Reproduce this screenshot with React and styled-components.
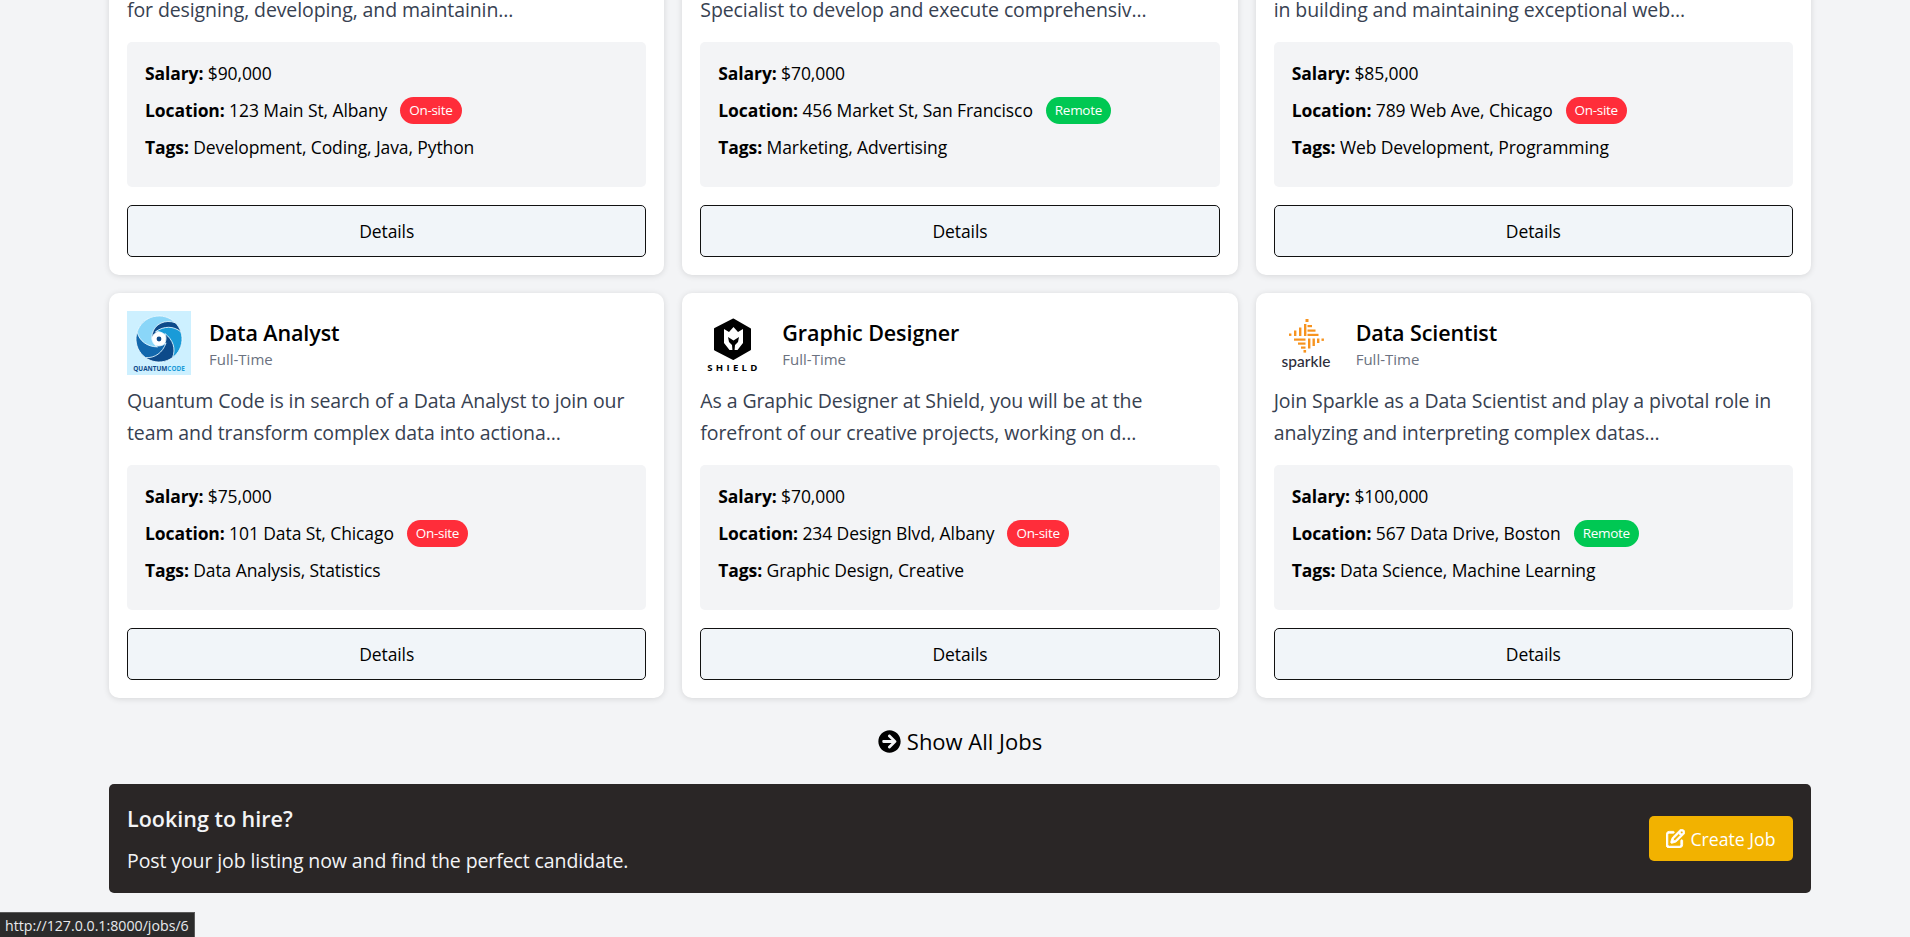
import React from "react"
import styled, { createGlobalStyle } from "styled-components"
import { FaArrowCircleRight } from "react-icons/fa"
import { FaRegPenToSquare } from "react-icons/fa6"

const GlobalStyle = createGlobalStyle`
  html, body {
    margin: 0;
    height: 100%;
    overflow: hidden;
    background: #f3f4f6;
  }
  * { box-sizing: border-box; }
  body {
    font-family: "Open Sans", "Noto Sans", "Liberation Sans", sans-serif;
    color: #000;
  }
`

const Page = styled.div`
  height: 937px;
  overflow: hidden;
  padding: 0 99px 0 109px;
`

const JobGrid = styled.section`
  display: grid;
  grid-template-columns: repeat(3, 1fr);
  gap: 18px;
  margin-top: -34px;
`

const Card = styled.article`
  background: #fff;
  border-radius: 10px;
  box-shadow: 0 1px 6px rgba(0, 0, 0, 0.12);
  padding: 18px;
  display: flex;
  flex-direction: column;
`

const CardHead = styled.header`
  display: flex;
  align-items: center;
  gap: 18px;
  height: 64px;
`

const HeadText = styled.div`
  padding-top: 2px;
`

const JobTitle = styled.h3`
  margin: 0;
  font-size: 21.5px;
  line-height: 28px;
  font-weight: 600;
  letter-spacing: -0.1px;
`

const JobType = styled.div`
  margin-top: 2px;
  font-size: 15px;
  line-height: 20px;
  color: #6b7280;
`

const Description = styled.p`
  margin: 10px 0 0;
  font-size: 19.5px;
  line-height: 32px;
  color: #374151;
  letter-spacing: -0.1px;
  white-space: nowrap;
`

const Info = styled.div`
  margin-top: 16px;
  background: #f3f4f6;
  border-radius: 5px;
  padding: 17px 18px 24px;
  height: 145px;
  font-size: 17.5px;
  letter-spacing: -0.1px;
`

const InfoRow = styled.div`
  display: flex;
  align-items: center;
  height: 28px;
  margin-bottom: 9px;

  b { font-weight: 700; }
`

const Badge = styled.span`
  margin-left: 13px;
  height: 27px;
  padding: 0 9px;
  border-radius: 14px;
  display: inline-flex;
  align-items: center;
  font-size: 13.5px;
  letter-spacing: -0.3px;
  color: #fff;
  background: ${p => (p.$remote ? "#00c853" : "#ff2d3a")};
`

const DetailsButton = styled.button`
  margin-top: 18px;
  height: 52px;
  width: 100%;
  background: #f1f5f9;
  border: 1px solid #111;
  border-radius: 5px;
  font: inherit;
  font-size: 17.5px;
  letter-spacing: -0.1px;
  color: #000;
`

const ShowAll = styled.a`
  display: flex;
  justify-content: center;
  align-items: center;
  gap: 6px;
  height: 86px;
  font-size: 22px;
  color: #000;
`

const Banner = styled.section`
  background: #2a2626;
  border-radius: 5px;
  height: 109px;
  padding: 0 18px;
  display: flex;
  align-items: center;
  justify-content: space-between;
  color: #f3f4f6;
`

const BannerCopy = styled.div`
  padding-top: 2px;
`

const BannerTitle = styled.h2`
  margin: 0 0 14px;
  font-size: 21.5px;
  line-height: 28px;
  font-weight: 600;
`

const BannerText = styled.p`
  margin: 0;
  font-size: 19.5px;
  line-height: 28px;
  letter-spacing: -0.1px;
`

const CreateButton = styled.button`
  width: 144px;
  height: 45px;
  border: 0;
  border-radius: 5px;
  background: #f2b200;
  color: #fff;
  font: inherit;
  font-size: 17.7px;
  display: flex;
  align-items: center;
  justify-content: center;
  gap: 5px;

  svg {
    stroke: currentColor;
    stroke-width: 24px;
  }
`

const StatusBubble = styled.div`
  position: fixed;
  left: 0;
  bottom: 0;
  width: 195px;
  height: 25px;
  padding-left: 5px;
  display: flex;
  align-items: center;
  background: #2b2b2b;
  border-top: 1px solid #5a5a5a;
  border-right: 1px solid #5a5a5a;
  color: #e8eaed;
  font-size: 14.2px;
`

const LogoBox = styled.div`
  width: 64px;
  height: 64px;
  flex: none;
  svg { display: block; }
`

const blade = "M0 -23 A23 23 0 0 1 20.5 10.5 C21 0 13 -9 3 -8 C-3 -8 -7 -4 -8 1 C-11 -9 -8 -18 0 -23 Z"
const blades = [
  { rotate: 0, fill: "#0d4a8a" },
  { rotate: 72, fill: "#1a9bd8" },
  { rotate: 144, fill: "#0d4a8a" },
  { rotate: 216, fill: "#1268ad" },
  { rotate: 288, fill: "#8ad6f8" },
]

const QuantumLogo = () => (
  <svg width="64" height="64" viewBox="0 0 64 64">
    <rect width="64" height="64" fill="#cdf0ff" />
    <g transform="translate(32 28)">
      <circle r="11" fill="#fff" />
      {blades.map(b => (
        <path key={b.rotate} d={blade} fill={b.fill} stroke="#e4f7ff" strokeWidth="0.8" transform={`rotate(${b.rotate})`} />
      ))}
      <circle r="6" fill="#fff" />
      <circle r="2.4" fill="#0d4a8a" />
    </g>
    <text x="32" y="60" textAnchor="middle" fontSize="6.4" fontWeight="700" fontFamily="Open Sans, sans-serif" fill="#0d4a8a">
      QUANTUM<tspan fill="#1a9bd8">CODE</tspan>
    </text>
  </svg>
)

const ShieldLogo = () => (
  <svg width="64" height="64" viewBox="0 0 64 64">
    <path d="M33.5 8.5 L50 18 V38.5 L33.5 48 L15 38.5 V18 Z" fill="#000" stroke="#000" strokeWidth="2" strokeLinejoin="round" />
    <path d="M24 18 L29 21 L33.5 16 L38 21 L43 18 V32 L37.5 39 H29.5 L24 32 Z" fill="#fff" />
    <path d="M28 26 L33.5 29.5 L39 26 L38 31 L35 34 L34.5 40 H32.5 L32 34 L29 31 Z" fill="#000" />
    <text x="34" y="60" textAnchor="middle" fontSize="9.6" fontWeight="700" fontFamily="Open Sans, sans-serif" letterSpacing="3.3" fill="#000">SHIELD</text>
  </svg>
)

const sparkBars = [
  [31.5, 8, 3, 3], [15, 22.5, 2.4, 2.4], [20, 19.5, 2.4, 5.5], [25, 16.5, 2.4, 8.5], [30, 13, 2.4, 12],
  [33.5, 14, 4.5, 2.2], [33.5, 18.5, 8, 2.2], [33.5, 22.8, 11, 2.2],
  [20, 27.5, 11.5, 2.2], [24, 31.5, 7.5, 2.2], [27, 35.5, 4.5, 2.2], [29.5, 39, 2.6, 2.6],
  [34, 27.5, 2.4, 10], [38.5, 27.5, 2.4, 7.5], [43, 27.5, 2.4, 4.5], [47.5, 27.5, 2.4, 2.4],
]

const SparkleLogo = () => (
  <svg width="64" height="64" viewBox="0 0 64 64">
    {sparkBars.map(([x, y, w, h], i) => <rect key={i} x={x} y={y} width={w} height={h} fill="#f7931e" />)}
    <text x="32" y="56" textAnchor="middle" fontSize="15.5" fontWeight="500" fontFamily="Lato, sans-serif" fill="#2e2e3a">sparkle</text>
  </svg>
)

const topJobs = [
  { id: 1, desc: "for designing, developing, and maintainin...", salary: "$90,000", location: "123 Main St, Albany", remote: false, tags: "Development, Coding, Java, Python" },
  { id: 2, desc: "Specialist to develop and execute comprehensiv...", salary: "$70,000", location: "456 Market St, San Francisco", remote: true, tags: "Marketing, Advertising" },
  { id: 3, desc: "in building and maintaining exceptional web...", salary: "$85,000", location: "789 Web Ave, Chicago", remote: false, tags: "Web Development, Programming" },
]

const bottomJobs = [
  { id: 4, logo: <QuantumLogo />, title: "Data Analyst", desc: ["Quantum Code is in search of a Data Analyst to join our", "team and transform complex data into actiona..."], salary: "$75,000", location: "101 Data St, Chicago", remote: false, tags: "Data Analysis, Statistics" },
  { id: 5, logo: <ShieldLogo />, title: "Graphic Designer", desc: ["As a Graphic Designer at Shield, you will be at the", "forefront of our creative projects, working on d..."], salary: "$70,000", location: "234 Design Blvd, Albany", remote: false, tags: "Graphic Design, Creative" },
  { id: 6, logo: <SparkleLogo />, title: "Data Scientist", desc: ["Join Sparkle as a Data Scientist and play a pivotal role in", "analyzing and interpreting complex datas..."], salary: "$100,000", location: "567 Data Drive, Boston", remote: true, tags: "Data Science, Machine Learning" },
]

const JobBody = ({ job }) => (
  <>
    <Info>
      <InfoRow><span><b>Salary:</b> {job.salary}</span></InfoRow>
      <InfoRow>
        <span><b>Location:</b> {job.location}</span>
        <Badge $remote={job.remote}>{job.remote ? "Remote" : "On-site"}</Badge>
      </InfoRow>
      <InfoRow><span><b>Tags:</b> {job.tags}</span></InfoRow>
    </Info>
    <DetailsButton>Details</DetailsButton>
  </>
)

export default function App() {
  return (
    <Page>
      <GlobalStyle />
      <JobGrid>
        {topJobs.map(job => (
          <Card key={job.id}>
            <Description>{job.desc}</Description>
            <JobBody job={job} />
          </Card>
        ))}
        {bottomJobs.map(job => (
          <Card key={job.id}>
            <CardHead>
              <LogoBox>{job.logo}</LogoBox>
              <HeadText>
                <JobTitle>{job.title}</JobTitle>
                <JobType>Full-Time</JobType>
              </HeadText>
            </CardHead>
            <Description>{job.desc[0]}<br />{job.desc[1]}</Description>
            <JobBody job={job} />
          </Card>
        ))}
      </JobGrid>
      <ShowAll><FaArrowCircleRight size={23} /> Show All Jobs</ShowAll>
      <Banner>
        <BannerCopy>
          <BannerTitle>Looking to hire?</BannerTitle>
          <BannerText>Post your job listing now and find the perfect candidate.</BannerText>
        </BannerCopy>
        <CreateButton><FaRegPenToSquare size={19} /> Create Job</CreateButton>
      </Banner>
      <StatusBubble>http://127.0.0.1:8000/jobs/6</StatusBubble>
    </Page>
  )
}
